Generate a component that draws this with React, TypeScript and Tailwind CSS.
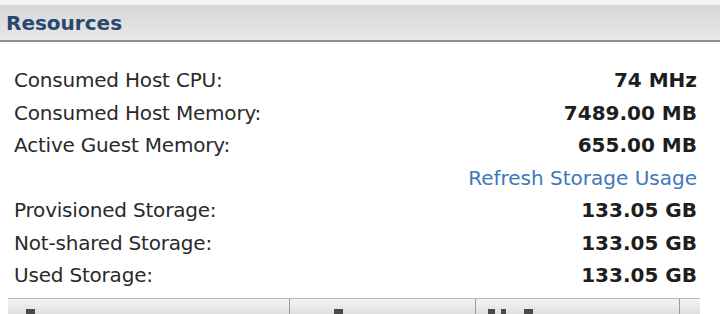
import React from "react";

const rows: { label?: string; value: string; link?: boolean }[] = [
  { label: "Consumed Host CPU:", value: "74 MHz" },
  { label: "Consumed Host Memory:", value: "7489.00 MB" },
  { label: "Active Guest Memory:", value: "655.00 MB" },
  { value: "Refresh Storage Usage", link: true },
  { label: "Provisioned Storage:", value: "133.05 GB" },
  { label: "Not-shared Storage:", value: "133.05 GB" },
  { label: "Used Storage:", value: "133.05 GB" },
];

function Blk({ w }: { w: number }) {
  return <span className="inline-block h-[5px] bg-[#4a4a4a] mr-[6px]" style={{ width: w }} />;
}

export default function App() {
  return (
    <div
      className="w-[720px] h-[314px] overflow-hidden bg-white"
      style={{ fontFamily: "Tahoma, 'DejaVu Sans', Verdana, sans-serif" }}
    >
      <div className="h-[5px] bg-[#f3f3f3]" />
      <div className="h-[37px] bg-gradient-to-b from-[#d6d6d6] to-[#e9e9e9] flex items-center px-[6px] border-b-2 border-[#8e8e8e]">
        <span className="text-[20px] font-bold text-[#2a4770]">Resources</span>
      </div>
      <div className="pt-[22px] pl-[14px] pr-[23px]">
        {rows.map((r, i) => (
          <div key={i} className="h-[32.5px] flex items-center justify-between text-[20px] text-[#2a2a2a]">
            <span className="tracking-[-0.2px]">{r.label ?? ""}</span>
            <span className={r.link ? "text-[#3d78b8]" : "font-bold text-[#1e1e1e]"}>{r.value}</span>
          </div>
        ))}
      </div>
      <div className="mt-[6px] ml-[8px] w-[692px] h-[20px] border-t border-[#b8b8b8] bg-gradient-to-b from-[#f4f4f4] to-[#dadada] flex">
        <div className="w-[282px] border-r border-[#9a9a9a] pl-[18px] pt-[10px] flex items-start">
          <Blk w={9} />
        </div>
        <div className="w-[186px] border-r border-[#9a9a9a] pl-[44px] pt-[10px] flex items-start">
          <Blk w={9} />
        </div>
        <div className="w-[204px] border-r border-[#9a9a9a] pl-[12px] pt-[10px] flex items-start">
          <Blk w={7} />
          <Blk w={5} />
          <span className="w-[12px]" />
          <Blk w={9} />
        </div>
        <div className="flex-1" />
      </div>
    </div>
  );
}
